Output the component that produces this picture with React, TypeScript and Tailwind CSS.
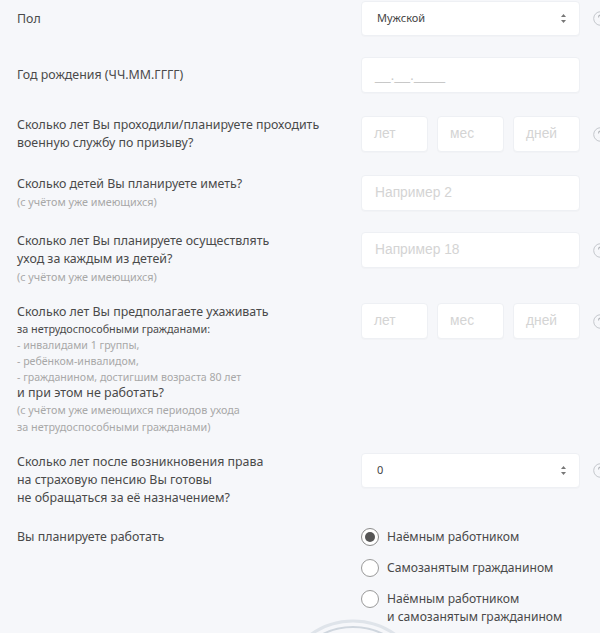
import React from 'react'

const label = "text-[12.4px] leading-[18px] text-[#4a4a4a]"
const sub = "text-[10.8px] leading-[18px] text-[#a8a8a8]"
const box = "bg-white border border-[#eef0f4] rounded-[4px] shadow-[0_1px_1px_rgba(0,0,0,0.02)]"
const ph = "text-[13.8px] text-[#d4d4d4] font-['Liberation_Sans',Arial,sans-serif]"

function Help() {
  return (
    <svg width="15" height="15" viewBox="0 0 15 15" className="shrink-0">
      <circle cx="7.5" cy="7.5" r="6.8" fill="none" stroke="#c4c7cc" strokeWidth="1" />
      <path d="M5.6 5.9 C5.6 4.7 6.5 4.1 7.5 4.1 C8.6 4.1 9.4 4.8 9.4 5.8 C9.4 7 7.6 7.1 7.6 8.6" fill="none" stroke="#b0b3b8" strokeWidth="1.1" strokeLinecap="round" />
      <circle cx="7.6" cy="10.7" r="0.7" fill="#b0b3b8" />
    </svg>
  )
}

function Arrows() {
  return (
    <svg width="7" height="11" viewBox="0 0 7 11" className="shrink-0">
      <path d="M3.5 1 L6 4 L1 4 Z" fill="#777" />
      <path d="M3.5 10 L6 7 L1 7 Z" fill="#777" />
    </svg>
  )
}

function Select({ value }: { value: string }) {
  return (
    <div className={`${box} h-[35px] w-[219px] flex items-center justify-between pl-[15px] pr-[12px]`}>
      <span className="text-[11px] text-[#444]">{value}</span>
      <Arrows />
    </div>
  )
}

function Triple() {
  return (
    <div className="flex gap-[9px] w-[219px]">
      {['лет', 'мес', 'дней'].map(t => (
        <div key={t} className={`${box} h-[36px] flex-1 flex items-center pl-[12px]`}>
          <span className={ph}>{t}</span>
        </div>
      ))}
    </div>
  )
}

function Text({ placeholder }: { placeholder: string }) {
  return (
    <div className={`${box} h-[36px] w-[219px] flex items-center pl-[13px]`}>
      <span className={ph}>{placeholder}</span>
    </div>
  )
}

function Row({
  left,
  control,
  help,
  center,
  className = '',
}: {
  left: React.ReactNode
  control: React.ReactNode
  help?: boolean
  center?: boolean
  className?: string
}) {
  return (
    <div className={`flex ${center ? 'items-center' : 'items-start'} ${className}`}>
      <div className="w-[361px] pl-[17px] shrink-0">{left}</div>
      <div className="flex items-center gap-[13px] shrink-0">
        <div className="w-[219px] shrink-0">{control}</div>
        {help && <Help />}
      </div>
    </div>
  )
}

function Radio({ checked, children }: { checked?: boolean; children: React.ReactNode }) {
  return (
    <div className="flex items-start gap-[8px]">
      <div
        className={`w-[18px] h-[18px] rounded-full border-[1.5px] ${checked ? 'border-[#8a8a8a]' : 'border-[#9a9a9a]'} bg-white flex items-center justify-center shrink-0`}
      >
        {checked && <div className="w-[10px] h-[10px] rounded-full bg-[#555]" />}
      </div>
      <div className="text-[12.1px] leading-[18px] text-[#4a4a4a]">{children}</div>
    </div>
  )
}

export default function App() {
  return (
    <div className="relative h-[633px] w-[600px] overflow-hidden bg-[#f6f7fa] font-['Noto_Sans',sans-serif] pt-[1px]">
      <Row center help left={<div className={label}>Пол</div>} control={<Select value="Мужской" />} className="h-[35px]" />

      <Row
        center
        className="mt-[21px]"
        left={<div className={label}>Год рождения (ЧЧ.ММ.ГГГГ)</div>}
        control={
          <div className={`${box} h-[36px] w-[219px] flex items-center pl-[13px]`}>
            <span className="text-[14px] text-[#c8c8c8] font-['Liberation_Sans',Arial,sans-serif]">__.__.____</span>
          </div>
        }
      />

      <Row
        help
        className="mt-[23px]"
        left={
          <div className={label}>
            Сколько лет Вы проходили/планируете проходить
            <br />
            военную службу по призыву?
          </div>
        }
        control={<Triple />}
      />

      <Row
        className="mt-[23px]"
        left={
          <div>
            <div className={label}>Сколько детей Вы планируете иметь?</div>
            <div className={sub}>(с учётом уже имеющихся)</div>
          </div>
        }
        control={<Text placeholder="Например 2" />}
      />

      <Row
        help
        className="mt-[21px]"
        left={
          <div>
            <div className={label}>
              Сколько лет Вы планируете осуществлять
              <br />
              уход за каждым из детей?
            </div>
            <div className={sub}>(с учётом уже имеющихся)</div>
          </div>
        }
        control={<Text placeholder="Например 18" />}
      />

      <Row
        help
        className="mt-[17px]"
        left={
          <div>
            <div className={label}>Сколько лет Вы предполагаете ухаживать</div>
            <div className="text-[10.8px] leading-[16px] text-[#4a4a4a]">за нетрудоспособными гражданами:</div>
            <div className="text-[10.6px] leading-[16px] text-[#a8a8a8]">
              - инвалидами 1 группы,
              <br />
              - ребёнком-инвалидом,
              <br />
              - гражданином, достигшим возраста 80 лет
            </div>
            <div className="text-[12.5px] leading-[16px] text-[#4a4a4a]">и при этом не работать?</div>
            <div className="text-[10.8px] leading-[17px] text-[#a8a8a8]">
              (с учётом уже имеющихся периодов ухода
              <br />
              за нетрудоспособными гражданами)
            </div>
          </div>
        }
        control={<Triple />}
      />

      <Row
        help
        className="mt-[18px]"
        left={
          <div className={label}>
            Сколько лет после возникновения права
            <br />
            на страховую пенсию Вы готовы
            <br />
            не обращаться за её назначением?
          </div>
        }
        control={<Select value="0" />}
      />

      <Row
        className="mt-[21px]"
        left={<div className={label}>Вы планируете работать</div>}
        control={
          <div className="flex flex-col gap-[13px]">
            <Radio checked>Наёмным работником</Radio>
            <Radio>Самозанятым гражданином</Radio>
            <Radio>
              Наёмным работником
              <br />и самозанятым гражданином
            </Radio>
          </div>
        }
      />

      <svg className="absolute left-[278px] top-[618px]" width="150" height="150" viewBox="0 0 150 150">
        <circle cx="75" cy="75" r="72" fill="none" stroke="#dfe4ea" strokeWidth="3" />
        <circle cx="75" cy="75" r="66" fill="none" stroke="#cfd6de" strokeWidth="2" />
      </svg>
    </div>
  )
}
